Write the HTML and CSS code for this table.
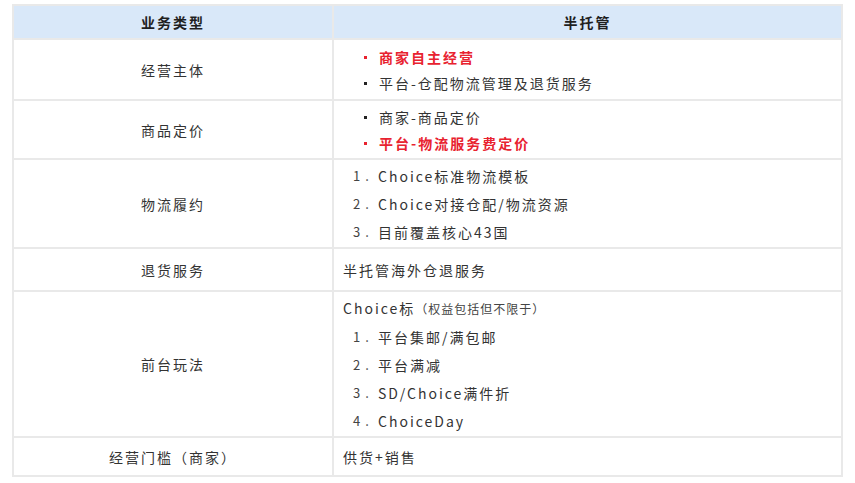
FILE: index.html
```html
<!DOCTYPE html>
<html lang="zh-CN">
<head>
<meta charset="utf-8">
<title>业务类型对比</title>
<link rel="stylesheet" href="styles.css">
</head>
<body>
<table class="cmp">
  <thead>
    <tr class="head">
      <th class="c1">业务类型</th>
      <th class="c2">半托管</th>
    </tr>
  </thead>
  <tbody>
    <tr class="r1">
      <td class="c1">经营主体</td>
      <td class="c2">
        <p class="bl red"><span class="dot"></span>商家自主经营</p>
        <p class="bl"><span class="dot"></span>平台-仓配物流管理及退货服务</p>
      </td>
    </tr>
    <tr class="r2">
      <td class="c1">商品定价</td>
      <td class="c2">
        <p class="bl"><span class="dot"></span>商家-商品定价</p>
        <p class="bl red"><span class="dot"></span>平台-物流服务费定价</p>
      </td>
    </tr>
    <tr class="r3">
      <td class="c1">物流履约</td>
      <td class="c2">
        <p class="nl"><span class="num">1.</span>Choice标准物流模板</p>
        <p class="nl"><span class="num">2.</span>Choice对接仓配/物流资源</p>
        <p class="nl"><span class="num">3.</span>目前覆盖核心43国</p>
      </td>
    </tr>
    <tr class="r4">
      <td class="c1">退货服务</td>
      <td class="c2"><p class="pl">半托管海外仓退服务</p></td>
    </tr>
    <tr class="r5">
      <td class="c1">前台玩法</td>
      <td class="c2">
        <p class="pl">Choice标<span class="small">（权益包括但不限于）</span></p>
        <p class="nl"><span class="num">1.</span>平台集邮/满包邮</p>
        <p class="nl"><span class="num">2.</span>平台满减</p>
        <p class="nl"><span class="num">3.</span>SD/Choice满件折</p>
        <p class="nl"><span class="num">4.</span>ChoiceDay</p>
      </td>
    </tr>
    <tr class="r6">
      <td class="c1">经营门槛（商家）</td>
      <td class="c2"><p class="pl">供货+销售</p></td>
    </tr>
  </tbody>
</table>
</body>
</html>
```

FILE: styles.css
```css
html, body {
  margin: 0;
  background: #ffffff;
}
body {
  padding: 4px 12px 0 12px;
  font-family: "Noto Sans CJK SC", "Noto Sans", sans-serif;
  font-size: 14px;
  color: #333333;
}
.cmp {
  width: 831px;
  border-collapse: collapse;
  table-layout: fixed;
  border: 2px solid #e9e9e9;
}
.cmp th, .cmp td {
  border: 2px solid #e9e9e9;
  padding: 0;
  vertical-align: middle;
}
.cmp .c1 {
  width: 318px;
  text-align: center;
  letter-spacing: 2px;
}
.cmp td.c2 {
  text-align: left;
}
.head th {
  background: #d9e8f9;
  height: 32px;
  font-weight: 700;
  color: #1f1f1f;
  letter-spacing: 2px;
  text-align: center;
}
.r1 td { height: 59px; }
.r2 td { height: 57px; }
.r3 td { height: 87px; }
.r4 td { height: 41px; }
.r5 td { height: 144px; }
.r6 td { height: 37px; }

p {
  margin: 0;
  letter-spacing: 2px;
  white-space: nowrap;
}
.bl {
  line-height: 26px;
  padding-left: 30px;
  display: flex;
  align-items: center;
}
.nl {
  line-height: 28px;
  padding-left: 19px;
  display: flex;
  align-items: center;
}
.pl {
  padding-left: 9px;
  line-height: 28px;
}
.dot {
  width: 15px;
  flex: none;
  display: flex;
  align-items: center;
  height: 26px;
}
.dot::before {
  content: "";
  width: 3px;
  height: 3px;
  background: currentColor;
  margin-top: 1px;
}
.num {
  width: 25px;
  flex: none;
  letter-spacing: 5px;
  font-size: 13px;
  color: #444;
}
.red {
  color: #e8222f;
  font-weight: 700;
}
.bl:not(.red) .dot::before {
  background: #222;
}
.small {
  font-size: 12px;
  letter-spacing: 1px;
  color: #444;
}
```
